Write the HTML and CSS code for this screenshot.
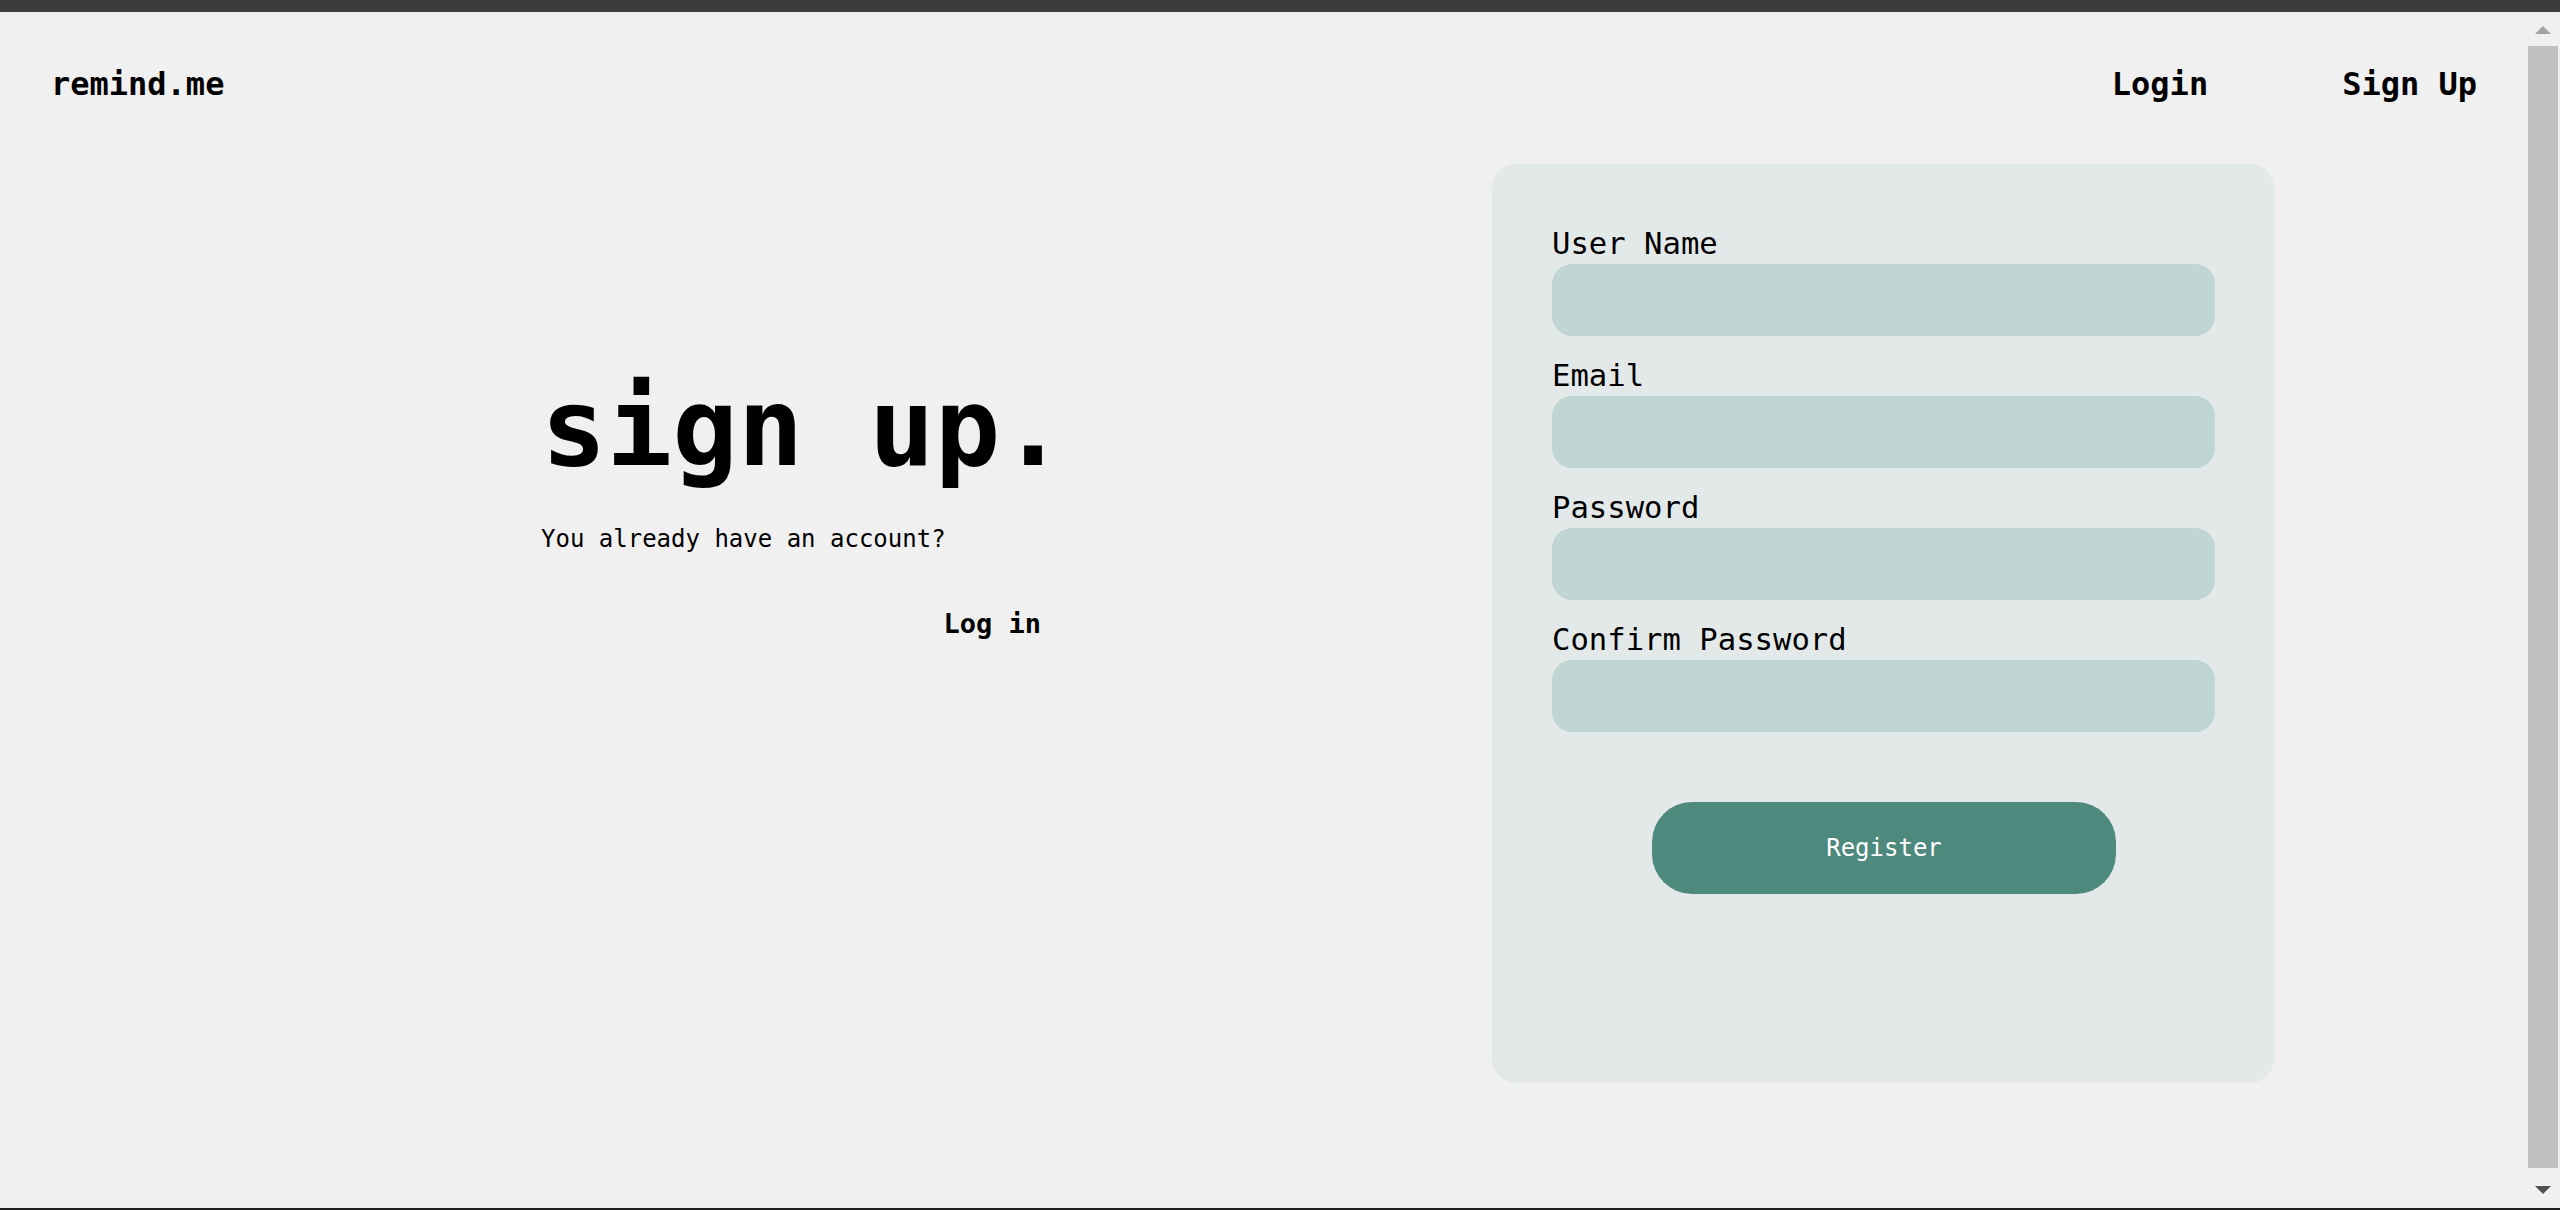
FILE: index.html
```html
<!DOCTYPE html>
<html lang="en">
<head>
<meta charset="utf-8">
<title>remind.me - sign up</title>
<link rel="stylesheet" href="styles.css">
</head>
<body>
<div class="topbar"></div>
<div class="viewport">
  <div class="page">
    <header class="header">
      <div class="logo">remind.me</div>
      <nav class="nav">
        <a class="nav-link" href="#">Login</a>
        <a class="nav-link" href="#">Sign Up</a>
      </nav>
    </header>
    <main class="main">
      <section class="intro">
        <h1 class="title">sign up.</h1>
        <p class="subtitle">You already have an account?</p>
        <a class="login-link" href="#">Log in</a>
      </section>
      <form class="card">
        <div class="field">
          <label class="label">User Name</label>
          <div class="input"></div>
        </div>
        <div class="field">
          <label class="label">Email</label>
          <div class="input"></div>
        </div>
        <div class="field">
          <label class="label">Password</label>
          <div class="input"></div>
        </div>
        <div class="field">
          <label class="label">Confirm Password</label>
          <div class="input"></div>
        </div>
        <div class="actions">
          <div class="button">Register</div>
        </div>
      </form>
    </main>
  </div>
  <div class="scrollbar">
    <div class="arrow-box up"><span class="arrow-up"></span></div>
    <div class="thumb"></div>
    <div class="arrow-box down"><span class="arrow-down"></span></div>
  </div>
</div>
<div class="bottombar"></div>
</body>
</html>
```

FILE: styles.css
```css
html, body {
  margin: 0;
  padding: 0;
}
body {
  width: 2560px;
  height: 1210px;
  overflow: hidden;
  background: #f0f0f0;
  font-family: "DejaVu Sans Mono", monospace;
  color: #000;
  display: flex;
  flex-direction: column;
}
.topbar {
  height: 12px;
  background: #3c3c3c;
  flex: none;
}
.bottombar {
  height: 2px;
  background: #202020;
  flex: none;
}
.viewport {
  flex: 1;
  display: flex;
  min-height: 0;
}
.page {
  flex: 1;
  display: flex;
  flex-direction: column;
}
.header {
  display: flex;
  justify-content: space-between;
  align-items: center;
  padding: 56px 51px 0 51px;
  height: 32px;
}
.logo {
  font-size: 32px;
  line-height: 32px;
  font-weight: bold;
}
.nav {
  display: flex;
  gap: 134px;
}
.nav-link {
  font-size: 32px;
  line-height: 32px;
  font-weight: bold;
  color: #000;
  text-decoration: none;
}
.main {
  display: flex;
  margin-top: 64px;
  padding-left: 541px;
  gap: 451px;
}
.intro {
  width: 500px;
  display: flex;
  flex-direction: column;
  padding-top: 209px;
}
.title {
  margin: 0;
  font-size: 109px;
  line-height: 109px;
  font-weight: bold;
  white-space: nowrap;
}
.subtitle {
  margin: 45px 0 0 0;
  font-size: 24px;
  line-height: 24px;
  white-space: nowrap;
}
.login-link {
  align-self: flex-end;
  margin-top: 59px;
  font-size: 27px;
  line-height: 27px;
  font-weight: bold;
  color: #000;
  text-decoration: none;
}
.card {
  width: 782px;
  height: 919px;
  box-sizing: border-box;
  background: #e3e9e9;
  border-radius: 24px;
  padding: 62px 59px 0 60px;
  display: flex;
  flex-direction: column;
  gap: 22px;
}
.field {
  display: flex;
  flex-direction: column;
}
.label {
  font-size: 30.6px;
  line-height: 36px;
  margin-bottom: 2px;
}
.input {
  height: 72px;
  background: #bfd6d3;
  border-radius: 20px;
}
.actions {
  display: flex;
  justify-content: center;
  margin-top: 48px;
}
.button {
  width: 464px;
  height: 92px;
  border-radius: 40px;
  background: #4e897e;
  color: #fff;
  font-size: 24px;
  display: flex;
  align-items: center;
  justify-content: center;
  margin-left: 1px;
}
.scrollbar {
  width: 32px;
  flex: none;
  display: flex;
  flex-direction: column;
  background: #f0f0f0;
}
.arrow-box {
  display: flex;
  justify-content: center;
  padding-right: 2px;
}
.arrow-box.up {
  height: 34px;
  align-items: flex-start;
  padding-top: 14px;
  box-sizing: border-box;
}
.arrow-box.down {
  height: 40px;
  align-items: flex-start;
  padding-top: 18px;
  box-sizing: border-box;
}
.arrow-up {
  width: 0;
  height: 0;
  border-left: 8px solid transparent;
  border-right: 8px solid transparent;
  border-bottom: 8px solid #a3a3a3;
}
.arrow-down {
  width: 0;
  height: 0;
  border-left: 8px solid transparent;
  border-right: 8px solid transparent;
  border-top: 8px solid #505050;
}
.thumb {
  flex: 1;
  width: 30px;
  background: #c1c1c1;
}
```
